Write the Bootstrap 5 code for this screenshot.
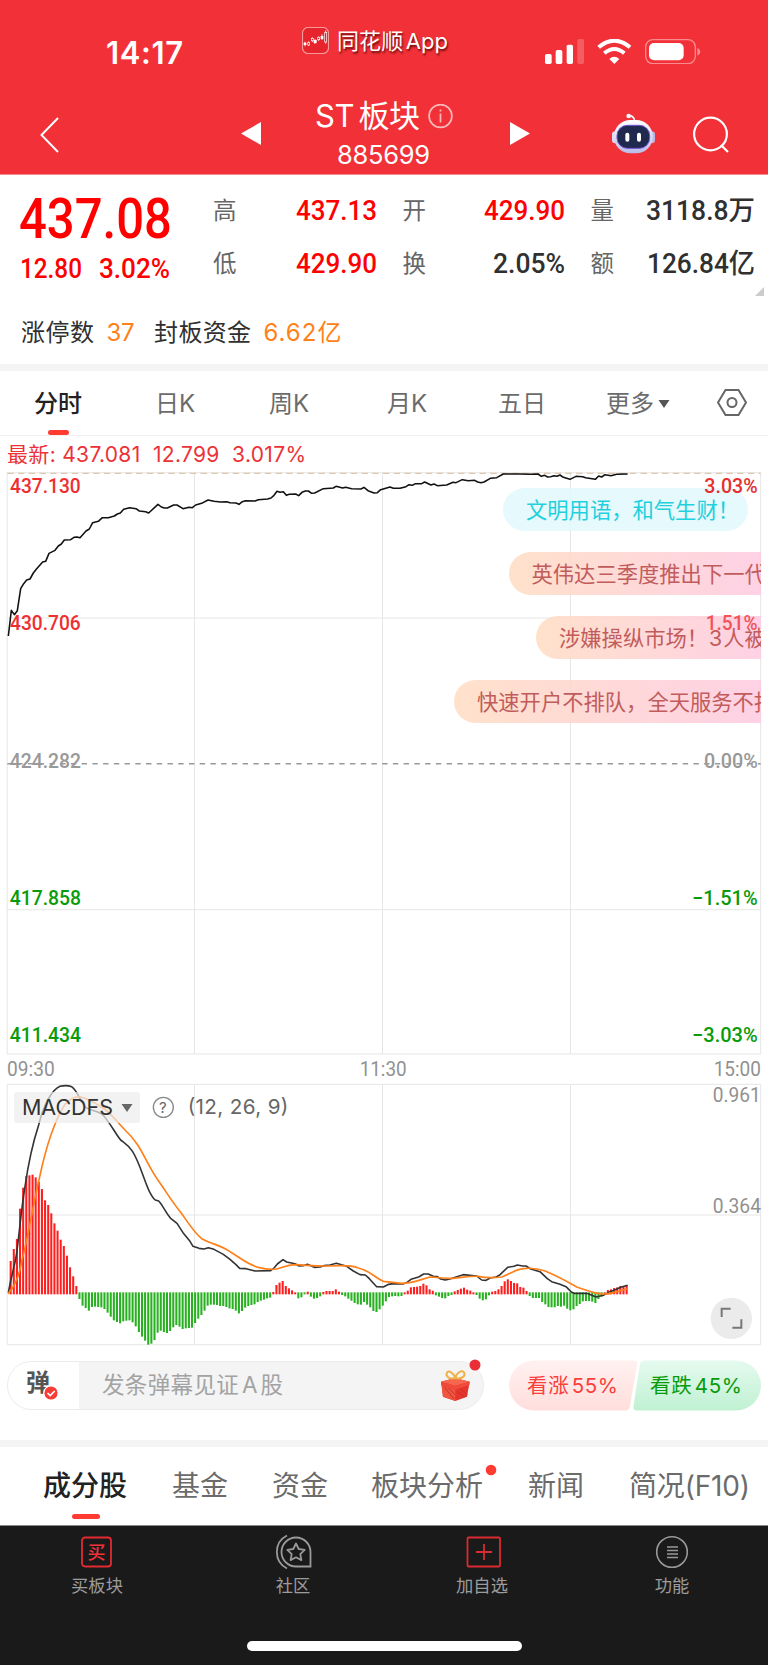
<!DOCTYPE html>
<html lang="zh-CN">
<head>
<meta charset="utf-8">
<meta name="viewport" content="width=device-width, initial-scale=1">
<title>ST板块 885699</title>
<link href="https://cdn.jsdelivr.net/npm/bootstrap@5.3.0/dist/css/bootstrap.min.css" rel="stylesheet">
<style>
body{font-family:Inter,"Noto Sans CJK SC",sans-serif;background:#fff;color:#303030;width:768px;overflow-x:hidden;line-height:1}
svg{display:block;flex:none}
.din{font-family:Roboto,"Noto Sans CJK SC",sans-serif;font-weight:500}
.fit{display:inline-block;white-space:nowrap;justify-self:start}
.snug{word-spacing:-4px}
.topbar{background:#f23037;border-bottom:1px solid #f98a8e;box-sizing:content-box;height:173.5px}
.statusbar{height:96px}
.clock{width:302px;padding-left:106px;padding-top:37px;font-size:31px;font-weight:600}
.appname{width:243px;padding-top:27px;gap:8px;font-size:22px;line-height:28px;text-shadow:1px 2px 2px rgba(60,0,0,.75)}
.sysicons{padding-top:39px;gap:13px}
.navrow{height:78px}
.navback{width:241px;padding:20px 0 0 39px}
.navtitle{width:289px}
.navtitle .names{width:249px;padding-left:54px}
.navtitle .t1{font-size:31px;line-height:40px;height:40px}
.navtitle .t2{font-size:25.5px;line-height:34px;margin:2px 0 0 22px}
.robot{width:162px;padding:17px 0 0 81px}
.search{margin-top:20px}
.quote{height:189px;padding-top:17px}
.bigprice{width:213px;padding-left:19px;color:#f00}
.bigprice .p{font-size:55px;line-height:56px;height:56px;margin-top:-1px}
.bigprice .c{font-size:28.5px;line-height:34px;margin-top:5px;gap:17px;padding-left:1px}
.stats{display:grid;grid-template-columns:24px 139.5px 26px 24px 138px 26px 24px 140px;row-gap:17px;height:110px;margin-top:1px;align-content:start}
.stats .k{font-size:23.5px;color:#666;line-height:36px;white-space:nowrap}
.stats .v{font-size:27.5px;line-height:36px;text-align:right;white-space:nowrap}
.up{color:#f00}
.corner{width:0;height:0;border-left:9px solid transparent;border-bottom:9px solid #ccc;right:4px;top:112px}
.limitup{padding-left:21px;height:34px;font-size:24px;line-height:34px;margin-top:13px}
.orange{color:#ff8119}
.stripe{height:7px;background:#f4f4f4}
.ctabs{display:grid;grid-template-columns:121px 114px 118px 111px 108px 111px auto;padding-left:34px;height:65px;border-bottom:1.5px solid #f0f0f0;align-items:center;font-size:24px;color:#6b6b6b}
.ctabs>span,.ctabs>b{padding-top:3px}
.ctabs b,.btabs b{color:#222;font-weight:500}
.mark-line{position:absolute;height:5.5px;border-radius:3px;background:#ff3b32}
.latest{height:36px;padding:1px 0 0 7px;font-size:21px;color:#ec3237;line-height:36px}
.plot{position:relative;height:583px}
.barrage{position:absolute;right:7px;height:43px;line-height:44px;font-size:21.3px;border-radius:22px 0 0 22px;padding-left:23px;color:#c25c5c;background:linear-gradient(90deg,rgba(255,221,196,.88),rgba(254,201,224,.85));overflow:hidden;white-space:nowrap;word-spacing:-5px}
.barrage.cy{background:rgba(226,248,252,.85);color:#1fd0de;border-radius:22px;right:20px;line-height:45px}
.macd{position:relative;height:291px}
.indicator{left:14px;top:37px;width:126px;height:31px;background:rgba(236,236,236,.7);border-radius:3px;padding-left:8px;line-height:31px;font-size:21.5px;color:#333}
.chatrow{margin-top:15px;height:49px;padding:0 7px}
.chatbox{width:477px;height:49px;border:1.5px solid #ececec;border-radius:25px;background:#f4f4f4;overflow:hidden}
.chatbox .tog{width:71px;background:#fff;padding-left:18px;font-size:24px;font-weight:700;line-height:42px;color:#555}
.chatbox .ph{padding-left:23px;font-size:22.5px;color:#a3a3a3;line-height:46px}
.votes{margin-left:25px;width:252px;height:51px;margin-top:-1px}
.votes .l{left:18px;color:#fa3e3b}.votes .r{left:141px;color:#0a9b0a}
.votes span{position:absolute;top:0;line-height:51px;font-size:20.5px}
.btabs{display:grid;grid-template-columns:129px 100px 99px 157px 101px auto;padding-left:43px;height:78px;font-size:28px;line-height:78px;color:#6b6b6b}
.dock{background:#1a1a1a;border-top:1px solid #8a8a8a;height:141px}
.dockgrid{display:grid;grid-template-columns:194px 198px 180px 196px}
.dockgrid>div{display:flex;flex-direction:column;align-items:center;padding-top:8px;font-size:17.3px;color:#9c9c9c}
.dockgrid svg{height:36px}
.dockgrid span{line-height:20px;margin-top:6px}
.homebar{width:275px;height:10px;border-radius:5px;background:#fff;margin:45px 0 0 246.5px}
</style>
</head>
<body>
<header class="topbar text-white">
  <div class="statusbar d-flex">
    <div class="clock"><span class="fit" data-w="77">14:17</span></div>
    <div class="appname d-flex align-items-start">
      <svg width="27" height="27" viewBox="0 0 81 81"><rect x="1.5" y="1.5" width="78" height="78" rx="17" fill="#e5242b" stroke="#f79a9d" stroke-width="3.5"/><g stroke="#fff" stroke-width="2.5" fill="none"><path d="M9 44v14M20 43v14M31 31v14M39 36v15M50 28v14M60 22v17M71 10v40"/></g><g fill="#fff"><rect x="5" y="47" width="8" height="7"/><rect x="35" y="39" width="9" height="9"/><rect x="56" y="27" width="8" height="9"/></g><g fill="#e5242b" stroke="#fff" stroke-width="2"><rect x="17" y="47" width="6" height="7"/><rect x="28" y="34" width="6" height="7"/><rect x="47" y="31" width="6" height="7"/><rect x="68" y="16" width="6" height="29"/></g></svg>
      <span class="fit snug" data-w="111">同花顺 App</span>
    </div>
    <div class="sysicons d-flex align-items-start">
      <svg width="39" height="25" viewBox="0 0 117 75" fill="#fff"><rect y="45" width="20" height="30" rx="5"/><rect x="32" y="33" width="20" height="42" rx="5"/><rect x="65" y="17" width="19" height="58" rx="5"/><rect x="97" width="20" height="75" rx="5" opacity=".22"/></svg>
      <svg width="35" height="25" viewBox="0 0 105 75" fill="none" stroke="#fff"><path d="M5 25Q52-15 99 25" stroke-width="12"/><path d="M22 43Q52 17 82 43" stroke-width="12"/><path d="M37 60Q52 46 67 60L52 75Z" fill="#fff" stroke="none"/></svg>
      <svg width="56" height="25" viewBox="0 0 168 75"><rect x="2" y="2" width="149" height="72" rx="22" fill="none" stroke="#f98b8e" stroke-width="4"/><rect x="12" y="12" width="104" height="52" rx="15" fill="#fff"/><path d="M157 26q9 4 9 12t-9 12z" fill="#f98b8e"/></svg>
    </div>
  </div>
  <div class="navrow d-flex">
    <div class="navback"><svg width="22" height="38" viewBox="0 0 22 38"><path d="M19 2L2.500 19L19 36" fill="none" stroke="#fff" stroke-width="2"/></svg></div>
    <div class="navtitle d-flex">
      <svg class="mt-4" width="20" height="26" viewBox="0 0 20 26"><path d="M20 2v23L0 13.500z" fill="#fff"/></svg>
      <div class="names">
        <div class="t1 d-flex align-items-center"><span class="fit snug" data-w="105">ST 板块</span><svg class="ms-2" width="25" height="25" viewBox="0 0 25 25" fill="none" stroke="#fbb9bb" stroke-width="1.700"><circle cx="12.500" cy="12" r="11.400"/><path d="M12.500 9.500v9M12.500 5.500v2"/></svg></div>
        <div class="t2"><span class="fit" data-w="93">885699</span></div>
      </div>
      <svg class="mt-4" width="20" height="26" viewBox="0 0 20 26"><path d="M0 2v23L20 13.500z" fill="#fff"/></svg>
    </div>
    <div class="robot"><svg width="45" height="42" viewBox="0 0 135 126">
      <defs><linearGradient id="rb" x2="0" y2="1"><stop stop-color="#fff"/><stop offset="1" stop-color="#b9bde6"/></linearGradient></defs>
      <path d="M71 27Q71 12 58 8" fill="none" stroke="#f4f1fa" stroke-width="5"/><circle cx="53" cy="9" r="7" fill="#fbf8ff"/>
      <rect x="3" y="55" width="20" height="36" rx="10" fill="#dcdcf3"/><rect x="112" y="55" width="20" height="36" rx="10" fill="#b9b9e6"/>
      <rect x="9" y="21" width="116" height="100" rx="49" fill="url(#rb)"/><rect x="18" y="37" width="98" height="69" rx="31" fill="#202a4e" stroke="#7451d8" stroke-width="3"/>
      <rect x="43" y="59" width="12" height="27" rx="6" fill="#fff"/><rect x="78" y="59" width="12" height="27" rx="6" fill="#fff"/></svg></div>
    <svg class="search" width="38" height="38" viewBox="0 0 38 38" fill="none" stroke="#fff" stroke-width="2.200"><circle cx="18.500" cy="18" r="16.400"/><path d="M29 29l7 7"/></svg>
  </div>
</header>

<section class="quote position-relative">
  <div class="d-flex">
    <div class="bigprice din">
      <div class="p"><span class="fit" data-w="153">437.08</span></div>
      <div class="c d-flex"><span class="fit" data-w="62">12.80</span><span class="fit" data-w="71">3.02%</span></div>
    </div>
    <div class="stats">
      <span class="k">高</span><span class="v din up"><span class="fit" data-w="81">437.13</span></span><i></i>
      <span class="k">开</span><span class="v din up"><span class="fit" data-w="81">429.90</span></span><i></i>
      <span class="k">量</span><span class="v din"><span class="fit" data-w="109">3118.8万</span></span>
      <span class="k">低</span><span class="v din up"><span class="fit" data-w="81">429.90</span></span><i></i>
      <span class="k">换</span><span class="v din"><span class="fit" data-w="72">2.05%</span></span><i></i>
      <span class="k">额</span><span class="v din"><span class="fit" data-w="108">126.84亿</span></span>
    </div>
  </div>
  <div class="corner position-absolute"></div>
  <div class="limitup d-flex"><span class="fit me-2" data-w="73">涨停数</span><span class="orange fit ms-1 me-3" data-w="28">37</span><span class="fit ms-1 me-2" data-w="97">封板资金</span><span class="orange fit ms-1" data-w="78">6.62亿</span></div>
</section>
<div class="stripe"></div>

<nav class="ctabs position-relative">
  <b>分时</b><span>日K</span><span>周K</span><span>月K</span><span>五日</span>
  <span class="d-flex align-items-center">更多<svg class="ms-1" width="12" height="8" viewBox="0 0 12 8"><path d="M.5 0h11L6 8z" fill="#555"/></svg></span>
  <svg width="30" height="27" viewBox="0 0 30 27" fill="none" stroke="#666" stroke-width="2"><path d="M8.500 1h13L29 13.500L21.500 26h-13L1 13.500z"/><circle cx="15" cy="13.500" r="4.500"/></svg>
  <i class="mark-line" style="left:47.5px;width:21.5px;top:59px"></i>
</nav>
<div class="latest"><span class="fit" data-w="299" style="white-space:pre">最新: 437.081  12.799  3.017%</span></div>

<section class="plot">
  <svg width="768" height="583" viewBox="0 306 2304 1749" fill="none">
    <g stroke="#e6e6e6" stroke-width="3"><path d="M21.500 308H2282M21.500 308V2052M2282 308V2052H21.500M583.500 308V2052M1147.500 308V2052M1711.500 308V2052M21.500 744H2282M21.500 1619H2282"/></g>
    <path d="M22 310H2282" stroke="#d9bd9a" stroke-width="3" stroke-dasharray="19 13.200"/>
    <path d="M22 1181H2282" stroke="#999" stroke-width="4.500" stroke-dasharray="16.200 16" stroke-dashoffset="2.500"/>
    <path stroke="#111" stroke-width="4.700" stroke-linejoin="round" d="M25 798L34 721L43 734L52 722L62 656L71 641L80 630L90 627L100 609L110 596L128 576L137 574L147 550L165 541L175 528L184 522L193 510L212 509L222 502L231 501L240 503L258 483L268 477L278 458L295 454L307 443L325 443L343 438L352 432L361 429L371 418L389 413L408 416L418 423L437 425L446 429L474 403L484 411L493 414L502 414L521 405L531 405L549 416L567 412L577 413L587 405L605 400L624 390L642 394L662 396L680 395L690 398L708 399L717 403L727 395L737 392L765 393L775 389L803 387L813 384L822 376L831 364L840 367L850 365L859 376L868 373L887 372L896 377L906 367L916 363L925 363L935 370L944 369L970 356L1000 354L1008 349L1028 354L1037 352L1055 356L1083 357L1092 352L1104 362L1122 369L1132 368L1142 359L1160 354L1170 351L1180 355L1200 355L1218 350L1227 344L1237 346L1246 341L1265 341L1274 336L1293 345L1302 342L1312 347L1340 345L1359 337L1368 338L1387 329L1405 332L1424 331L1433 336L1443 338L1452 336L1471 325L1490 323L1510 312L1560 312L1590 313L1614 312L1624 319L1634 316L1643 321L1652 320L1662 317L1671 319L1680 315L1690 322L1700 325L1710 328L1728 319L1748 320L1757 323L1786 328L1796 318L1805 321L1815 314L1833 317L1850 313L1883 312"/>
    <g font-family="Roboto, sans-serif" font-weight="500" font-size="60">
      <g fill="#ee2f31"><text x="30" y="368" textLength="212" lengthAdjust="spacingAndGlyphs">437.130</text><text x="30" y="780" textLength="212" lengthAdjust="spacingAndGlyphs">430.706</text></g>
      <g fill="#999"><text x="29" y="1193" textLength="214" lengthAdjust="spacingAndGlyphs">424.282</text><text x="2112" y="1193" textLength="161" lengthAdjust="spacingAndGlyphs">0.00%</text></g>
      <g fill="#0a9b0a"><text x="29" y="1605" textLength="214" lengthAdjust="spacingAndGlyphs">417.858</text><text x="29" y="2017" textLength="214" lengthAdjust="spacingAndGlyphs">411.434</text><text x="2076" y="1605" textLength="197" lengthAdjust="spacingAndGlyphs">−1.51%</text><text x="2076" y="2017" textLength="197" lengthAdjust="spacingAndGlyphs">−3.03%</text></g>
    </g>
  </svg>
  <div class="barrage cy" style="top:16.5px;width:245px"><span class="fit" data-w="213">文明用语，和气生财！</span></div>
  <div class="barrage" style="top:80.5px;width:252.5px">英伟达三季度推出下一代</div>
  <div class="barrage" style="top:144.5px;width:225px">涉嫌操纵市场！ 3 人被</div>
  <div class="barrage" style="top:208.5px;width:307px">快速开户不排队，全天服务不打</div>
  <svg class="position-absolute top-0 end-0" width="68" height="160" viewBox="2100 306 204 480" font-family="Roboto, sans-serif" font-weight="500" font-size="60"><text x="2113" y="368" textLength="160" lengthAdjust="spacingAndGlyphs" fill="#e5302f">3.03%</text><text x="2117" y="780" textLength="156" lengthAdjust="spacingAndGlyphs" fill="#f4525a">1.51%</text></svg>
</section>

<section class="macd">
  <svg width="768" height="291" viewBox="0 45 2304 873" fill="none">
    <g stroke="#e6e6e6" stroke-width="3"><path d="M21.500 133H2282V914H21.500ZM583.500 133V914M1147.500 133V914M1711.500 133V914M21.500 525H2282"/></g>
    <g id="bars" stroke-width="6.200"></g>
    <path stroke="#333" stroke-width="4.800" stroke-linejoin="round" d="M25 758C35 700 42 690 50 640C60 560 65 500 75 440C85 370 98 310 116 255C130 195 155 150 180 139Q200 134 215 140C235 155 240 185 258 203C275 213 290 212 305 222C325 238 345 280 362 300C375 310 385 315 398 335C420 370 435 430 450 458Q460 477 466 480L476 483C488 495 498 520 512 535L531 550L549 578L570 604L579 619L597 625L612 627L625 623L642 628L670 643L690 658L708 674L719 685L738 686L765 693L812 692L822 684L832 672L849 659L860 666L885 671L897 678L910 677L922 673L943 682L960 681L972 677L990 675L1009 670L1040 679L1060 693L1080 704L1096 705L1108 716L1130 740L1150 741L1166 733L1180 731L1208 732L1220 728L1233 718L1256 711L1271 702L1285 702L1300 709L1312 710L1322 717L1336 720L1350 717L1366 712L1390 704L1430 708L1445 720L1458 721L1470 714L1488 711L1498 706L1523 682L1542 679L1552 675L1568 678L1578 678L1592 687L1620 695L1642 716L1655 725L1680 733L1698 740L1714 756L1722 760L1760 760L1774 765L1788 771L1810 766L1830 755L1846 749L1862 742L1883 736"/>
    <path stroke="#ff7f18" stroke-width="5" d="M24 761C45 740 57 710 65 665C85 590 98 500 118 415C140 310 165 240 195 193Q220 166 242 171C270 178 290 192 305 202C335 220 345 240 375 270C430 320 435 370 482 432C510 473 520 490 542 517C565 548 580 575 605 596C640 615 660 614 690 635C720 652 735 670 775 682Q805 690 830 687C850 682 860 675 885 674C920 675 945 679 990 678C1020 676 1050 674 1075 684C1110 692 1120 710 1150 724L1205 730C1240 730 1260 719 1290 711C1315 711 1330 717 1360 715C1390 712 1410 707 1435 709C1460 715 1480 714 1505 711C1530 702 1545 689 1570 686C1600 682 1620 688 1635 693C1675 709 1700 724 1730 741C1760 750 1780 762 1810 762C1840 763 1860 750 1882 747"/>
    <g font-family="Roboto, sans-serif" font-size="61" fill="#919191"><text x="21" y="108" textLength="143" lengthAdjust="spacingAndGlyphs">09:30</text><text x="1079" y="108" textLength="141" lengthAdjust="spacingAndGlyphs">11:30</text><text x="2141" y="108" textLength="142" lengthAdjust="spacingAndGlyphs">15:00</text><text x="2138" y="186" textLength="144" lengthAdjust="spacingAndGlyphs">0.961</text><text x="2138" y="520" textLength="145" lengthAdjust="spacingAndGlyphs">0.364</text></g>
    <circle cx="490" cy="202" r="30" stroke="#888" stroke-width="4"/>
    <g font-family="Inter, sans-serif" fill="#666"><text x="477" y="218" font-size="45">?</text><text x="563" y="223" font-size="62" textLength="302">(12, 26, 9)</text></g>
    <circle cx="2194" cy="835" r="62" fill="#ebebeb"/><path d="M2165 831V806H2192M2224 838V863H2197" stroke="#777" stroke-width="6"/>
  </svg>
  <div class="indicator position-absolute"><span class="fit" data-w="91">MACDFS</span><svg class="position-absolute" style="right:7px;top:12px" width="12" height="8" viewBox="0 0 12 8"><path d="M.5 0h11L6 8z" fill="#666"/></svg></div>
</section>

<section class="chatrow d-flex">
  <div class="position-relative">
    <div class="chatbox d-flex"><div class="tog">弹</div><div class="ph"><span class="fit snug" data-w="181">发条弹幕见证 A 股</span></div></div>
    <svg class="position-absolute" style="left:36px;top:24px" width="16" height="16" viewBox="0 0 16 16"><circle cx="8" cy="8" r="7.200" fill="#f73d36" stroke="#fff" stroke-width="1.200"/><path d="M4.500 8l2.700 2.500L11.700 6" fill="none" stroke="#fff" stroke-width="1.700"/></svg>
    <svg class="position-absolute" style="left:433px;top:8px" width="30" height="33" viewBox="0 0 90 99"><path d="M3 38L45 27L89 38L81 83L46 96L9 83Z" fill="#e5352c"/><path d="M3 38L45 27L89 38L46 50Z" fill="#f5684f"/><path d="M46 50L89 38L88 48L46 62L3 48V38Z" fill="#f04a3c"/><path d="M46 62V96L9 83L5 49Z" fill="#ef5540"/><path d="M60 59L82 76M52 67L74 84M12 53L42 90M26 57L44 76" stroke="#c9302a" stroke-width="3"/><path d="M46 27C30 31 17 24 20 13C25 0 42 13 46 27C49 12 67-1 73 12C77 24 61 31 46 27" fill="none" stroke="#efb24a" stroke-width="6"/></svg>
    <svg class="position-absolute" style="left:462px;top:-2px" width="12" height="12"><circle cx="6" cy="6" r="5.500" fill="#e93037"/></svg>
  </div>
  <div class="votes position-relative">
    <svg width="252" height="51" viewBox="0 0 252 51"><defs><linearGradient id="gr" x2="0" y2="1"><stop stop-color="#fff1f0"/><stop offset="1" stop-color="#ffdedc"/></linearGradient><linearGradient id="gg" x2="0" y2="1"><stop stop-color="#e5faef"/><stop offset="1" stop-color="#bff1d2"/></linearGradient></defs><path d="M25 .5H125Q129 .5 128 4L121 46Q120 50.500 116 50.500H25A25 25 0 0 1 25 .5Z" fill="url(#gr)"/><path d="M135 .5H227A25 25 0 0 1 227 50.500H128Q124 50.500 124.500 46L131 4Q132 .5 135 .5Z" fill="url(#gg)"/></svg>
    <span class="l fit snug" data-w="91">看涨 55%</span><span class="r fit snug" data-w="92">看跌 45%</span>
  </div>
</section>
<div class="stripe" style="margin-top:30px"></div>
<nav class="btabs position-relative"><b>成分股</b><span>基金</span><span>资金</span><span>板块分析</span><span>新闻</span><span class="fit" data-w="121">简况(F10)</span>
  <i class="mark-line" style="left:72px;width:28px;top:67px"></i>
  <svg class="position-absolute" style="left:485px;top:17.5px" width="12" height="12"><circle cx="6" cy="6" r="5.300" fill="#ff3b32"/></svg>
</nav>

<footer class="dock">
  <div class="dockgrid">
    <div><svg width="32" viewBox="0 0 32 36" fill="none"><rect x="1" y="3.500" width="29" height="29" rx="3" stroke="#e32a32" stroke-width="1.800"/><text x="6.500" y="24.500" font-size="18" font-weight="500" fill="#f0323a">买</text></svg><span>买板块</span></div>
    <div><svg width="37" viewBox="0 0 37 36" fill="none" stroke="#999" stroke-width="1.800"><path d="M21 32.500A14.500 14.500 0 1 1 35.500 18V32.500Z"/><path d="M12 1.500A18.500 18.500 0 0 0 12 34.500"/><path d="M21 9.500l2.700 5.500 6 .9-4.400 4.200 1.100 6-5.400-2.800-5.400 2.800 1.100-6-4.400-4.200 6-.9z" stroke-linejoin="round"/></svg><span>社区</span></div>
    <div><svg class="ms-1" width="36" viewBox="0 0 36 36" fill="none" stroke="#d92b30" stroke-width="1.800"><rect x="1.500" y="3.500" width="32.500" height="29" rx="1"/><path d="M18 10v16M10 18h16"/></svg><span>加自选</span></div>
    <div class="ps-1"><svg width="34" viewBox="0 0 34 36" fill="none" stroke="#999" stroke-width="1.600"><circle cx="17" cy="18" r="15.300"/><path d="M12 13h11M12 16.500h11M12 20h11M12 23.500h11"/></svg><span>功能</span></div>
  </div>
  <div class="homebar"></div>
</footer>

<script src="https://cdn.jsdelivr.net/npm/bootstrap@5.3.0/dist/js/bootstrap.bundle.min.js"></script>
<script>
// MACD histogram: one bar per minute, values are plot levels around the zero line
const ZERO = 760, STEP = 9.38;
const levels = [663,627,597,506,443,408,406,404,412,425,447,481,495,520,550,572,599,618,647,682,709,738,
777,797,804,812,801,800,801,802,807,818,830,841,846,850,844,842,841,847,859,876,890,902,914,911,900,878,872,876,879,873,862,855,860,867,865,864,863,849,836,825,812,797,794,794,795,798,798,801,805,807,812,820,813,803,798,795,793,786,782,779,775,773,
756,735,728,723,738,745,751,757,775,772,763,755,770,776,774,769,756,753,753,753,748,755,765,769,776,782,789,793,794,786,794,802,813,816,808,797,
784,771,769,768,769,768,757,752,742,741,740,738,731,736,748,752,766,770,774,775,768,765,754,750,746,743,749,752,757,765,776,781,778,766,755,753,748,738,724,718,723,729,730,741,743,753,
768,774,774,774,786,793,801,802,802,798,800,797,806,811,808,798,792,784,783,783,785,789,777,770,757,750,748,744,742,738,740,736];
document.getElementById('bars').innerHTML = levels.map((y, i) => {
  const x = (32 + i * STEP).toFixed(1), up = y < ZERO;
  return `<path d="M${x} ${up ? 763 : 757}V${y}" stroke="${up ? '#ff1e1e' : '#27b01f'}"/>`;
}).join('');
// Fits each text to its slot: price figures are condensed, other text is tracked
document.querySelectorAll('.fit[data-w]').forEach(el => {
  const natural = el.getBoundingClientRect().width, w = +el.dataset.w;
  if (el.closest('.din')) {
    el.style.transformOrigin = 'left';
    el.style.transform = `scaleX(${w / natural})`;
    el.style.marginRight = (w - natural) + 'px';
  } else {
    const n = el.textContent.length, gap = (w - natural) / (n - 1);
    el.style.letterSpacing = gap + 'px';
  }
});
</script>
</body>
</html>
